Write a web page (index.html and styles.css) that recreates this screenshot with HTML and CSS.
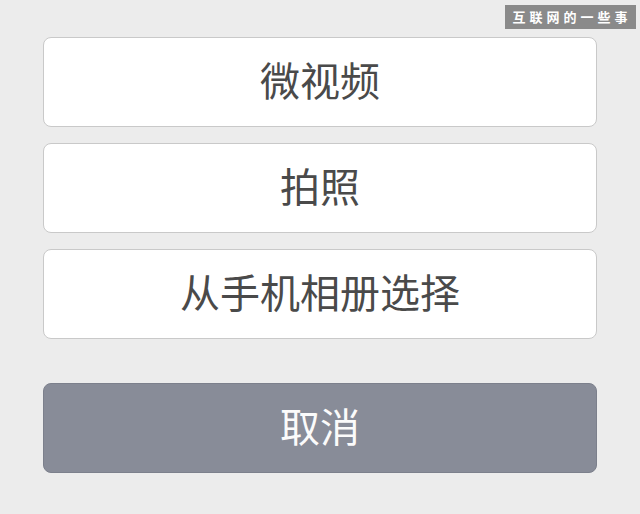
FILE: index.html
```html
<!DOCTYPE html>
<html lang="zh-CN">
<head>
<meta charset="utf-8">
<title>选择</title>
<link rel="stylesheet" href="styles.css">
</head>
<body>
<div class="sheet">
  <div class="group">
    <button class="btn">微视频</button>
    <button class="btn">拍照</button>
    <button class="btn">从手机相册选择</button>
  </div>
  <button class="btn cancel">取消</button>
</div>
<div class="badge">互联网的一些事</div>
</body>
</html>
```
FILE: styles.css
```css
html, body {
  margin: 0;
  padding: 0;
  background: #ececec;
  width: 640px;
  height: 514px;
  overflow: hidden;
  font-family: "Noto Sans CJK SC", "Noto Sans", sans-serif;
}

.sheet {
  padding: 37px 43px 0 43px;
  display: flex;
  flex-direction: column;
  gap: 44px;
}

.group {
  display: flex;
  flex-direction: column;
  gap: 16px;
}

.btn {
  display: flex;
  align-items: center;
  justify-content: center;
  box-sizing: border-box;
  width: 554px;
  height: 90px;
  margin: 0;
  padding: 0 0 6px 0;
  background: #ffffff;
  border: 1px solid #c9c9c9;
  border-radius: 8px;
  color: #4a4a4a;
  font-family: inherit;
  font-size: 40px;
  font-weight: 400;
  line-height: 1;
}

.cancel {
  background: #888c98;
  border-color: #7c808c;
  color: #fbfbfb;
}

.badge {
  position: absolute;
  top: 5px;
  left: 505px;
  width: 131px;
  height: 24px;
  box-sizing: border-box;
  background: #8a8a8a;
  color: #ffffff;
  font-size: 13px;
  line-height: 24px;
  letter-spacing: 4px;
  text-align: center;
  padding-left: 3px;
  font-weight: 700;
}
```
